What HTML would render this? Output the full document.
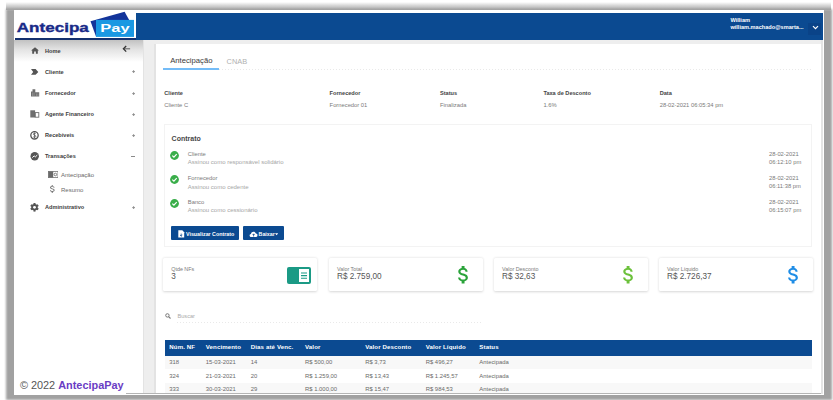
<!DOCTYPE html>
<html><head><meta charset="utf-8"><style>
html,body{margin:0;padding:0;width:833px;height:400px;overflow:hidden;background:#fff;}
body{position:relative;font-family:"Liberation Sans", sans-serif;}
.t{position:absolute;white-space:nowrap;}
.r{position:absolute;}
</style></head><body>
<div class="r" style="left:5.5px;top:9px;width:826px;height:391px;background:#a1a1a1;filter:blur(1.3px);"></div>
<div class="r" style="left:6px;top:2px;width:825px;height:8px;background:linear-gradient(rgba(165,165,165,0),#a2a2a2);filter:blur(0.5px);"></div>
<div class="r" style="left:14px;top:10px;width:810.00px;height:384.60px;background:#fff;"></div>
<div class="r" style="left:143px;top:40px;width:680.00px;height:354.00px;background:#eeeeee;"></div>
<div class="r" style="left:142.6px;top:40px;width:1.00px;height:354.00px;background:#e3e3e3;"></div>
<div class="r" style="left:153.8px;top:44px;width:2.20px;height:350.00px;background:#e3e3e3;"></div>
<div class="r" style="left:156px;top:44px;width:665.00px;height:350.00px;background:#fff;"></div>
<div class="r" style="left:14px;top:40px;width:129.00px;height:355.00px;background:#fff;"></div>
<div class="r" style="left:14px;top:40px;width:128.60px;height:22.00px;background:linear-gradient(#c2c2c2,#e4e4e4 45%,#ffffff);"></div>
<div class="r" style="left:136px;top:13px;width:687.00px;height:27.00px;background:#0b4a91;"></div>
<div class="r" style="left:15px;top:38.3px;width:121.00px;height:2.00px;background:#13306e;"></div>
<svg class="r" style="left:0;top:0" width="140" height="42" viewBox="0 0 140 42"><polygon points="90.5,21.3 124.6,11.8 130,21.5 96,36.5" fill="#13349a"/><rect x="96" y="19.9" width="38" height="17" fill="#1a98e2"/><text x="16.8" y="31.7" font-family="Liberation Sans" font-weight="bold" font-size="12.6" fill="#182a88" stroke="#182a88" stroke-width="0.35" textLength="72" lengthAdjust="spacingAndGlyphs">Antecipa</text><text x="100.3" y="31.8" font-family="Liberation Sans" font-weight="bold" font-size="11.2" fill="#fff" textLength="29.3" lengthAdjust="spacingAndGlyphs">Pay</text></svg>
<div class="t" style="left:730.40px;top:17.82px;font-size:5.65px;line-height:5.65px;color:#fff;font-weight:bold;">William</div>
<div class="t" style="left:730.40px;top:25.46px;font-size:5.6px;line-height:5.6px;color:#fff;font-weight:bold;">william.machado@smarta...</div>
<div class="r" style="left:808px;top:23px;width:13.00px;height:11.50px;background:#0a4388;"></div>
<svg class="r" style="left:811.5px;top:25px" width="7" height="5" viewBox="0 0 7 5"><path d="M1 1.2 L3.5 3.7 L6 1.2" stroke="#fff" stroke-width="1.2" fill="none"/></svg>
<div class="t" style="left:45.00px;top:48.66px;font-size:5.6px;line-height:5.6px;color:#404040;font-weight:bold;">Home</div>
<div class="t" style="left:45.00px;top:69.76px;font-size:5.6px;line-height:5.6px;color:#404040;font-weight:bold;">Cliente</div>
<div class="t" style="left:45.00px;top:90.96px;font-size:5.6px;line-height:5.6px;color:#404040;font-weight:bold;">Fornecedor</div>
<div class="t" style="left:45.00px;top:111.86px;font-size:5.6px;line-height:5.6px;color:#404040;font-weight:bold;">Agente Financeiro</div>
<div class="t" style="left:45.00px;top:132.86px;font-size:5.6px;line-height:5.6px;color:#404040;font-weight:bold;">Recebíveis</div>
<div class="t" style="left:45.00px;top:154.06px;font-size:5.6px;line-height:5.6px;color:#404040;font-weight:bold;">Transações</div>
<div class="t" style="left:45.00px;top:204.96px;font-size:5.6px;line-height:5.6px;color:#404040;font-weight:bold;">Administrativo</div>
<div class="t" style="left:61.00px;top:172.32px;font-size:6px;line-height:6px;color:#6a6a6a;font-weight:normal;">Antecipação</div>
<div class="t" style="left:61.00px;top:186.72px;font-size:6px;line-height:6px;color:#6a6a6a;font-weight:normal;">Resumo</div>
<svg class="r" style="left:131.6px;top:70.30px" width="3.2" height="3.2" viewBox="0 0 3.2 3.2"><path d="M0.2 1.6 H3 M1.6 0.2 V3" stroke="#8c8c8c" stroke-width="0.95"/></svg>
<svg class="r" style="left:131.6px;top:91.50px" width="3.2" height="3.2" viewBox="0 0 3.2 3.2"><path d="M0.2 1.6 H3 M1.6 0.2 V3" stroke="#8c8c8c" stroke-width="0.95"/></svg>
<svg class="r" style="left:131.6px;top:112.50px" width="3.2" height="3.2" viewBox="0 0 3.2 3.2"><path d="M0.2 1.6 H3 M1.6 0.2 V3" stroke="#8c8c8c" stroke-width="0.95"/></svg>
<svg class="r" style="left:131.6px;top:133.50px" width="3.2" height="3.2" viewBox="0 0 3.2 3.2"><path d="M0.2 1.6 H3 M1.6 0.2 V3" stroke="#8c8c8c" stroke-width="0.95"/></svg>
<svg class="r" style="left:131.6px;top:205.80px" width="3.2" height="3.2" viewBox="0 0 3.2 3.2"><path d="M0.2 1.6 H3 M1.6 0.2 V3" stroke="#8c8c8c" stroke-width="0.95"/></svg>
<div class="r" style="left:131.4px;top:156.1px;width:3.40px;height:0.80px;background:#8a8a8a;"></div>
<svg class="r" style="left:122px;top:45px" width="9" height="8" viewBox="0 0 9 8"><path d="M8.1 3.8 H2" stroke="#666" stroke-width="1.1" fill="none"/><path d="M4.2 1 L1.4 3.8 L4.2 6.6" stroke="#333" stroke-width="1.3" fill="none"/></svg>
<svg class="r" style="left:30.5px;top:47px" width="8" height="7" viewBox="0 0 8 7"><path d="M4 0.2 L7.9 3.5 H6.8 V6.8 H4.9 V4.6 H3.1 V6.8 H1.2 V3.5 H0.1 Z" fill="#555"/></svg>
<svg class="r" style="left:30.8px;top:68.8px" width="8" height="6" viewBox="0 0 8 6"><path d="M0 0 H4.6 L7.3 2.9 L4.6 5.8 H0 L2.2 2.9 Z" fill="#555"/></svg>
<svg class="r" style="left:30.5px;top:89px" width="9" height="8" viewBox="0 0 9 8"><path d="M0 7.5 V2.5 H1.5 V0.3 H4.3 V3.2 H8.2 V7.5 Z" fill="#555" opacity="0.85"/><path d="M1.5 3.5 V7 M3 3.5 V7 M5.5 4.5 V7 M7 4.5 V7" stroke="#fff" stroke-width="0.35" opacity="0.6"/></svg>
<svg class="r" style="left:30px;top:110px" width="10" height="8" viewBox="0 0 10 8"><rect x="0.3" y="0.3" width="4.8" height="7.2" fill="#555" opacity="0.85"/><rect x="5.3" y="2.6" width="3.5" height="4.6" stroke="#555" stroke-width="0.9" fill="none" opacity="0.85"/></svg>
<svg class="r" style="left:30px;top:131px" width="9" height="9" viewBox="0 0 9 9"><circle cx="4.5" cy="4.3" r="3.7" stroke="#555" stroke-width="1.3" fill="none"/><path d="M5.8 2.9 C5.5 2 3.3 2 3.3 3.2 C3.3 4.4 5.9 4.0 5.9 5.3 C5.9 6.5 3.4 6.5 3.1 5.5 M4.5 1.6 V7" stroke="#555" stroke-width="0.8" fill="none"/></svg>
<svg class="r" style="left:30px;top:152px" width="9.5" height="9" viewBox="0 0 9.5 9"><circle cx="4.7" cy="4.3" r="4.2" fill="#555"/><path d="M2.3 5.6 L4.2 3.9 L5.3 4.9 L7.3 3.1" stroke="#fff" stroke-width="1" fill="none"/></svg>
<svg class="r" style="left:30px;top:203px" width="9" height="9" viewBox="0 0 9 9"><g fill="#555"><circle cx="4.5" cy="4.3" r="3.2"/><rect x="3.5" y="0" width="2" height="8.6"/><rect x="3.5" y="0" width="2" height="8.6" transform="rotate(60 4.5 4.3)"/><rect x="3.5" y="0" width="2" height="8.6" transform="rotate(120 4.5 4.3)"/></g><circle cx="4.5" cy="4.3" r="1.4" fill="#fff"/></svg>
<svg class="r" style="left:47.8px;top:171.3px" width="10.5" height="7" viewBox="0 0 10.5 7"><rect x="0.4" y="0.4" width="9.6" height="6.2" stroke="#777" stroke-width="0.8" fill="none"/><rect x="0.4" y="0.4" width="4.8" height="6.2" fill="#6a6a6a"/><circle cx="7.4" cy="3.5" r="1.3" stroke="#555" stroke-width="0.7" fill="none"/></svg>
<svg class="r" style="left:47.28px;top:184.37px" width="11.14" height="9.87" viewBox="0 0 24 24" preserveAspectRatio="none"><path d="M11.8 10.9c-2.27-.59-3-1.2-3-2.15 0-1.09 1.01-1.85 2.7-1.85 1.78 0 2.44.85 2.5 2.1h2.21c-.07-1.72-1.12-3.3-3.21-3.81V3h-3v2.16c-1.94.42-3.5 1.68-3.5 3.61 0 2.31 1.91 3.46 4.7 4.13 2.5.6 3 1.48 3 2.41 0 .69-.49 1.79-2.7 1.79-2.06 0-2.870-.92-2.98-2.1h-2.2c.12 2.19 1.76 3.42 3.68 3.83V21h3v-2.15c1.95-.37 3.5-1.5 3.5-3.55 0-2.840-2.43-3.81-4.7-4.4z" fill="#777"/></svg>
<div class="t" style="left:170.20px;top:57.48px;font-size:7.7px;line-height:7.7px;color:#3a3a3a;font-weight:normal;">Antecipação</div>
<div class="t" style="left:226.60px;top:57.74px;font-size:7.4px;line-height:7.4px;color:#b0b0b0;font-weight:normal;">CNAB</div>
<div class="r" style="left:163.4px;top:68.4px;width:56.00px;height:1.40px;background:#74bcf7;"></div>
<div class="r" style="left:219.4px;top:69px;width:592.60px;height:1.00px;background:repeating-linear-gradient(90deg,#e9e9e9 0 1px,transparent 1px 3px);"></div>
<div class="t" style="left:164.30px;top:90.56px;font-size:5.6px;line-height:5.6px;color:#444;font-weight:bold;">Cliente</div>
<div class="t" style="left:164.30px;top:102.99px;font-size:5.8px;line-height:5.8px;color:#7a7a7a;font-weight:normal;">Cliente C</div>
<div class="t" style="left:329.60px;top:90.56px;font-size:5.6px;line-height:5.6px;color:#444;font-weight:bold;">Fornecedor</div>
<div class="t" style="left:329.60px;top:102.99px;font-size:5.8px;line-height:5.8px;color:#7a7a7a;font-weight:normal;">Fornecedor 01</div>
<div class="t" style="left:440.00px;top:90.56px;font-size:5.6px;line-height:5.6px;color:#444;font-weight:bold;">Status</div>
<div class="t" style="left:440.00px;top:102.99px;font-size:5.8px;line-height:5.8px;color:#7a7a7a;font-weight:normal;">Finalizada</div>
<div class="t" style="left:543.40px;top:90.56px;font-size:5.6px;line-height:5.6px;color:#444;font-weight:bold;">Taxa de Desconto</div>
<div class="t" style="left:543.40px;top:102.99px;font-size:5.8px;line-height:5.8px;color:#7a7a7a;font-weight:normal;">1.6%</div>
<div class="t" style="left:659.70px;top:90.56px;font-size:5.6px;line-height:5.6px;color:#444;font-weight:bold;">Data</div>
<div class="t" style="left:659.70px;top:102.99px;font-size:5.8px;line-height:5.8px;color:#7a7a7a;font-weight:normal;">28-02-2021 06:05:34 pm</div>
<div class="r" style="left:164.2px;top:124.4px;width:648.00px;height:122.40px;background:#fff;border:1px solid #f3f3f3;box-sizing:border-box;"></div>
<div class="t" style="left:171.60px;top:134.67px;font-size:7px;line-height:7px;color:#484848;font-weight:bold;">Contrato</div>
<svg class="r" style="left:169.6px;top:150.60px" width="9" height="9" viewBox="0 0 9 9"><circle cx="4.5" cy="4.5" r="4.4" fill="#3aae4a"/><path d="M2.3 4.6 L3.9 6.1 L6.7 3.2" stroke="#fff" stroke-width="1.2" fill="none"/></svg>
<div class="t" style="left:187.80px;top:151.59px;font-size:5.8px;line-height:5.8px;color:#7a7a7a;font-weight:normal;">Cliente</div>
<div class="t" style="left:187.80px;top:159.42px;font-size:6.0px;line-height:6.0px;color:#a6a6a6;font-weight:normal;">Assinou como responsável solidário</div>
<div class="t" style="left:769.00px;top:151.59px;font-size:5.8px;line-height:5.8px;color:#7a7a7a;font-weight:normal;">28-02-2021</div>
<div class="t" style="left:769.00px;top:159.59px;font-size:5.8px;line-height:5.8px;color:#7a7a7a;font-weight:normal;">06:12:10 pm</div>
<svg class="r" style="left:169.6px;top:174.80px" width="9" height="9" viewBox="0 0 9 9"><circle cx="4.5" cy="4.5" r="4.4" fill="#3aae4a"/><path d="M2.3 4.6 L3.9 6.1 L6.7 3.2" stroke="#fff" stroke-width="1.2" fill="none"/></svg>
<div class="t" style="left:187.80px;top:175.79px;font-size:5.8px;line-height:5.8px;color:#7a7a7a;font-weight:normal;">Fornecedor</div>
<div class="t" style="left:187.80px;top:183.62px;font-size:6.0px;line-height:6.0px;color:#a6a6a6;font-weight:normal;">Assinou como cedente</div>
<div class="t" style="left:769.00px;top:175.79px;font-size:5.8px;line-height:5.8px;color:#7a7a7a;font-weight:normal;">28-02-2021</div>
<div class="t" style="left:769.00px;top:183.79px;font-size:5.8px;line-height:5.8px;color:#7a7a7a;font-weight:normal;">06:11:38 pm</div>
<svg class="r" style="left:169.6px;top:198.60px" width="9" height="9" viewBox="0 0 9 9"><circle cx="4.5" cy="4.5" r="4.4" fill="#3aae4a"/><path d="M2.3 4.6 L3.9 6.1 L6.7 3.2" stroke="#fff" stroke-width="1.2" fill="none"/></svg>
<div class="t" style="left:187.80px;top:199.59px;font-size:5.8px;line-height:5.8px;color:#7a7a7a;font-weight:normal;">Banco</div>
<div class="t" style="left:187.80px;top:207.42px;font-size:6.0px;line-height:6.0px;color:#a6a6a6;font-weight:normal;">Assinou como cessionário</div>
<div class="t" style="left:769.00px;top:199.59px;font-size:5.8px;line-height:5.8px;color:#7a7a7a;font-weight:normal;">28-02-2021</div>
<div class="t" style="left:769.00px;top:207.59px;font-size:5.8px;line-height:5.8px;color:#7a7a7a;font-weight:normal;">06:15:07 pm</div>
<div class="r" style="left:171.2px;top:226.2px;width:67.40px;height:14.10px;background:#0b4a91;border-radius:1px;"></div>
<div class="r" style="left:243.3px;top:226.2px;width:40.50px;height:14.10px;background:#0b4a91;border-radius:1px;"></div>
<svg class="r" style="left:177.5px;top:229.5px" width="7" height="8" viewBox="0 0 7 8"><path d="M0.3 0.3 H4.3 L6.2 2.2 V7.5 H0.3 Z" fill="#fff"/><path d="M3.2 3.6 V6.2 M2.1 5.1 L3.2 6.2 L4.3 5.1" stroke="#0b4a92" stroke-width="0.8" fill="none"/></svg>
<div class="t" style="left:186.00px;top:231.61px;font-size:5.3px;line-height:5.3px;color:#fff;font-weight:bold;">Visualizar Contrato</div>
<svg class="r" style="left:248.5px;top:229.5px" width="9" height="8" viewBox="0 0 9 8"><path d="M2.2 7 C0.2 7 0 4.2 2 4 C2.2 1.4 6.2 1 6.9 3.6 C9 3.6 9 7 7.1 7 Z" fill="#fff"/><path d="M4.6 6.5 V3.9 M3.6 4.9 L4.6 3.9 L5.6 4.9" stroke="#0b4a92" stroke-width="0.8" fill="none"/></svg>
<div class="t" style="left:258.60px;top:231.61px;font-size:5.3px;line-height:5.3px;color:#fff;font-weight:bold;">Baixar</div>
<svg class="r" style="left:275.4px;top:232.6px" width="4" height="3" viewBox="0 0 4 3"><path d="M0 0.3 H3.2 L1.6 2.2 Z" fill="#fff"/></svg>
<div class="r" style="left:163.2px;top:257.6px;width:154.3px;height:33px;background:#fff;box-shadow:0 0.5px 2.5px rgba(0,0,0,0.16);border-radius:1.5px;"></div>
<div class="t" style="left:171.20px;top:266.73px;font-size:5.4px;line-height:5.4px;color:#7a7a7a;font-weight:normal;">Qtde NFs</div>
<div class="t" style="left:171.20px;top:273.46px;font-size:8.2px;line-height:8.2px;color:#555;font-weight:normal;">3</div>
<div class="r" style="left:329px;top:257.6px;width:153.5px;height:33px;background:#fff;box-shadow:0 0.5px 2.5px rgba(0,0,0,0.16);border-radius:1.5px;"></div>
<div class="t" style="left:337.00px;top:266.73px;font-size:5.4px;line-height:5.4px;color:#7a7a7a;font-weight:normal;">Valor Total</div>
<div class="t" style="left:337.00px;top:273.46px;font-size:8.2px;line-height:8.2px;color:#555;font-weight:normal;">R$ 2.759,00</div>
<svg class="r" style="left:452.12px;top:263.28px" width="23.14" height="23.33" viewBox="0 0 24 24" preserveAspectRatio="none"><path d="M11.8 10.9c-2.27-.59-3-1.2-3-2.15 0-1.09 1.01-1.85 2.7-1.85 1.78 0 2.44.85 2.5 2.1h2.21c-.07-1.72-1.12-3.3-3.21-3.81V3h-3v2.16c-1.94.42-3.5 1.68-3.5 3.61 0 2.31 1.91 3.46 4.7 4.13 2.5.6 3 1.48 3 2.41 0 .69-.49 1.79-2.7 1.79-2.06 0-2.870-.92-2.98-2.1h-2.2c.12 2.19 1.76 3.42 3.68 3.83V21h3v-2.15c1.95-.37 3.5-1.5 3.5-3.55 0-2.840-2.43-3.81-4.7-4.4z" fill="#2aa33a"/></svg>
<div class="r" style="left:494px;top:257.6px;width:153.5px;height:33px;background:#fff;box-shadow:0 0.5px 2.5px rgba(0,0,0,0.16);border-radius:1.5px;"></div>
<div class="t" style="left:502.00px;top:266.73px;font-size:5.4px;line-height:5.4px;color:#7a7a7a;font-weight:normal;">Valor Desconto</div>
<div class="t" style="left:502.00px;top:273.46px;font-size:8.2px;line-height:8.2px;color:#555;font-weight:normal;">R$ 32,63</div>
<svg class="r" style="left:617.12px;top:263.28px" width="23.14" height="23.33" viewBox="0 0 24 24" preserveAspectRatio="none"><path d="M11.8 10.9c-2.27-.59-3-1.2-3-2.15 0-1.09 1.01-1.85 2.7-1.85 1.78 0 2.44.85 2.5 2.1h2.21c-.07-1.72-1.12-3.3-3.21-3.81V3h-3v2.16c-1.94.42-3.5 1.68-3.5 3.61 0 2.31 1.91 3.46 4.7 4.13 2.5.6 3 1.48 3 2.41 0 .69-.49 1.79-2.7 1.79-2.06 0-2.870-.92-2.98-2.1h-2.2c.12 2.19 1.76 3.42 3.68 3.83V21h3v-2.15c1.95-.37 3.5-1.5 3.5-3.55 0-2.840-2.43-3.81-4.7-4.4z" fill="#6cc13b"/></svg>
<div class="r" style="left:659px;top:257.6px;width:153.5px;height:33px;background:#fff;box-shadow:0 0.5px 2.5px rgba(0,0,0,0.16);border-radius:1.5px;"></div>
<div class="t" style="left:667.00px;top:266.73px;font-size:5.4px;line-height:5.4px;color:#7a7a7a;font-weight:normal;">Valor Líquido</div>
<div class="t" style="left:667.00px;top:273.46px;font-size:8.2px;line-height:8.2px;color:#555;font-weight:normal;">R$ 2.726,37</div>
<svg class="r" style="left:782.12px;top:263.28px" width="23.14" height="23.33" viewBox="0 0 24 24" preserveAspectRatio="none"><path d="M11.8 10.9c-2.27-.59-3-1.2-3-2.15 0-1.09 1.01-1.85 2.7-1.85 1.78 0 2.44.85 2.5 2.1h2.21c-.07-1.72-1.12-3.3-3.21-3.81V3h-3v2.16c-1.94.42-3.5 1.68-3.5 3.61 0 2.31 1.91 3.46 4.7 4.13 2.5.6 3 1.48 3 2.41 0 .69-.49 1.79-2.7 1.79-2.06 0-2.870-.92-2.98-2.1h-2.2c.12 2.19 1.76 3.42 3.68 3.83V21h3v-2.15c1.95-.37 3.5-1.5 3.5-3.55 0-2.840-2.43-3.81-4.7-4.4z" fill="#1f8de6"/></svg>
<div class="r" style="left:287.25px;top:266.9px;width:23.85px;height:16.8px;background:#1b9a85;border-radius:2px;"></div>
<div class="r" style="left:299.2px;top:269.4px;width:9.80px;height:12.20px;background:#fff;"></div>
<svg class="r" style="left:300.9px;top:272px" width="6.3" height="7.5" viewBox="0 0 6.3 7.5"><path d="M0 1 H6.3 M0 3.6 H6.3 M0 6.2 H6.3" stroke="#1b9a85" stroke-width="1.1"/></svg>
<svg class="r" style="left:165.2px;top:312.8px" width="6" height="6" viewBox="0 0 6 6"><circle cx="2.4" cy="2.4" r="1.7" stroke="#777" stroke-width="1" fill="none"/><path d="M3.6 3.6 L5.5 5.5" stroke="#777" stroke-width="1.1"/></svg>
<div class="t" style="left:177.50px;top:313.56px;font-size:5.6px;line-height:5.6px;color:#aaa;font-weight:normal;">Buscar</div>
<div class="r" style="left:177px;top:322px;width:304.30px;height:1.00px;background:repeating-linear-gradient(90deg,#e9e9e9 0 1px,transparent 1px 3px);"></div>
<div class="r" style="left:165px;top:355.8px;width:647.00px;height:13.50px;background:#f8f8f8;"></div>
<div class="r" style="left:165px;top:383.3px;width:647.00px;height:9.50px;background:#f8f8f8;"></div>
<div class="r" style="left:165px;top:339.5px;width:646.80px;height:16.30px;background:#0b4a91;"></div>
<div class="t" style="left:169.30px;top:344.44px;font-size:6.1px;line-height:6.1px;color:#fff;font-weight:bold;letter-spacing:0.12px;">Núm. NF</div>
<div class="t" style="left:205.70px;top:344.44px;font-size:6.1px;line-height:6.1px;color:#fff;font-weight:bold;letter-spacing:0.12px;">Vencimento</div>
<div class="t" style="left:250.75px;top:344.44px;font-size:6.1px;line-height:6.1px;color:#fff;font-weight:bold;letter-spacing:0.12px;">Dias até Venc.</div>
<div class="t" style="left:305.00px;top:344.44px;font-size:6.1px;line-height:6.1px;color:#fff;font-weight:bold;letter-spacing:0.12px;">Valor</div>
<div class="t" style="left:365.20px;top:344.44px;font-size:6.1px;line-height:6.1px;color:#fff;font-weight:bold;letter-spacing:0.12px;">Valor Desconto</div>
<div class="t" style="left:425.70px;top:344.44px;font-size:6.1px;line-height:6.1px;color:#fff;font-weight:bold;letter-spacing:0.12px;">Valor Líquido</div>
<div class="t" style="left:479.30px;top:344.44px;font-size:6.1px;line-height:6.1px;color:#fff;font-weight:bold;letter-spacing:0.12px;">Status</div>
<div class="t" style="left:169.30px;top:359.81px;font-size:5.9px;line-height:5.9px;color:#6a6a6a;font-weight:normal;">318</div>
<div class="t" style="left:205.70px;top:359.81px;font-size:5.9px;line-height:5.9px;color:#6a6a6a;font-weight:normal;">15-03-2021</div>
<div class="t" style="left:250.75px;top:359.81px;font-size:5.9px;line-height:5.9px;color:#6a6a6a;font-weight:normal;">14</div>
<div class="t" style="left:305.00px;top:359.81px;font-size:5.9px;line-height:5.9px;color:#6a6a6a;font-weight:normal;">R$ 500,00</div>
<div class="t" style="left:365.20px;top:359.81px;font-size:5.9px;line-height:5.9px;color:#6a6a6a;font-weight:normal;">R$ 3,73</div>
<div class="t" style="left:425.70px;top:359.81px;font-size:5.9px;line-height:5.9px;color:#6a6a6a;font-weight:normal;">R$ 496,27</div>
<div class="t" style="left:479.30px;top:359.81px;font-size:5.9px;line-height:5.9px;color:#6a6a6a;font-weight:normal;">Antecipada</div>
<div class="t" style="left:169.30px;top:373.51px;font-size:5.9px;line-height:5.9px;color:#6a6a6a;font-weight:normal;">324</div>
<div class="t" style="left:205.70px;top:373.51px;font-size:5.9px;line-height:5.9px;color:#6a6a6a;font-weight:normal;">21-03-2021</div>
<div class="t" style="left:250.75px;top:373.51px;font-size:5.9px;line-height:5.9px;color:#6a6a6a;font-weight:normal;">20</div>
<div class="t" style="left:305.00px;top:373.51px;font-size:5.9px;line-height:5.9px;color:#6a6a6a;font-weight:normal;">R$ 1.259,00</div>
<div class="t" style="left:365.20px;top:373.51px;font-size:5.9px;line-height:5.9px;color:#6a6a6a;font-weight:normal;">R$ 13,43</div>
<div class="t" style="left:425.70px;top:373.51px;font-size:5.9px;line-height:5.9px;color:#6a6a6a;font-weight:normal;">R$ 1.245,57</div>
<div class="t" style="left:479.30px;top:373.51px;font-size:5.9px;line-height:5.9px;color:#6a6a6a;font-weight:normal;">Antecipada</div>
<div class="t" style="left:169.30px;top:387.21px;font-size:5.9px;line-height:5.9px;color:#6a6a6a;font-weight:normal;">333</div>
<div class="t" style="left:205.70px;top:387.21px;font-size:5.9px;line-height:5.9px;color:#6a6a6a;font-weight:normal;">30-03-2021</div>
<div class="t" style="left:250.75px;top:387.21px;font-size:5.9px;line-height:5.9px;color:#6a6a6a;font-weight:normal;">29</div>
<div class="t" style="left:305.00px;top:387.21px;font-size:5.9px;line-height:5.9px;color:#6a6a6a;font-weight:normal;">R$ 1.000,00</div>
<div class="t" style="left:365.20px;top:387.21px;font-size:5.9px;line-height:5.9px;color:#6a6a6a;font-weight:normal;">R$ 15,47</div>
<div class="t" style="left:425.70px;top:387.21px;font-size:5.9px;line-height:5.9px;color:#6a6a6a;font-weight:normal;">R$ 984,53</div>
<div class="t" style="left:479.30px;top:387.21px;font-size:5.9px;line-height:5.9px;color:#6a6a6a;font-weight:normal;">Antecipada</div>
<div class="r" style="left:126.2px;top:392.8px;width:696.80px;height:1.00px;background:#b5b5b5;"></div>
<div class="r" style="left:821px;top:40px;width:2.30px;height:354.00px;background:#e4e4e4;"></div>
<div class="r" style="left:14px;top:394px;width:810.00px;height:1.00px;background:#fff;"></div>
<div class="t" style="left:19.9px;top:380.27px;font-size:10.9px;line-height:10.9px;color:#555;">© 2022 <b style="color:#6a3dc4">AntecipaPay</b></div>
</body></html>
